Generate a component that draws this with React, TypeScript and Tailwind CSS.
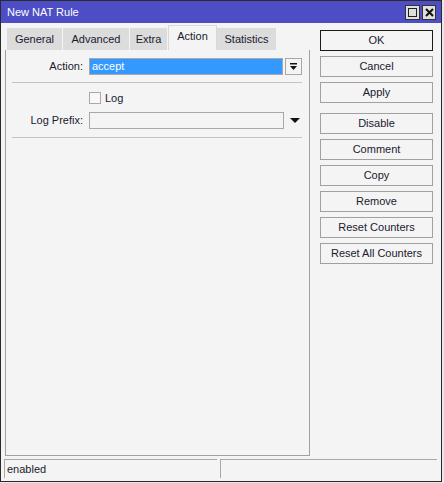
import { ReactNode } from "react";

const font = { fontFamily: '"Liberation Sans", Arial, sans-serif' };

function Tab({ label, width, active }: { label: string; width: number; active?: boolean }) {
    return (
        <div
            className={
                active
                    ? "flex h-[25px] items-center justify-center border-x border-t border-[#d8d8d8] bg-[#f4f4f4] pb-[3px]"
                    : "flex h-[22px] items-center justify-center border-r border-[#f4f4f4] bg-[#dcdcdc]"
            }
            style={{ width }}
        >
            {label}
        </div>
    );
}

function SideButton({ label, primary }: { label: string; primary?: boolean }) {
    return (
        <button
            className={`flex h-[21px] w-[113px] items-center justify-center bg-[#f4f4f4] border ${
                primary ? "border-[#1a1a1a]" : "border-[#a0a0a0]"
            }`}
        >
            {label}
        </button>
    );
}

function Row({ label, children }: { label: string; children: ReactNode }) {
    return (
        <div className="flex h-[17px] items-center">
            <span className="w-[77px] text-right">{label}</span>
            <div className="ml-[6px] flex items-center">{children}</div>
        </div>
    );
}

export default function App() {
    const tabs = [
        { label: "General", width: 56 },
        { label: "Advanced", width: 67 },
        { label: "Extra", width: 38 },
        { label: "Action", width: 49, active: true },
        { label: "Statistics", width: 60 },
    ];

    return (
        <div className="h-[483px] w-[444px] bg-[#e8e8e8] text-[11px] text-[#1a1a2e]" style={font}>
            <div className="flex h-[482px] w-[442px] flex-col border border-[#2a2a2a] bg-[#f4f4f4]">
                {/* title bar */}
                <div className="flex h-[22px] items-center justify-between bg-[#4d4dc6] pl-[6px] pr-[5px]">
                    <span className="text-[11px] text-white">New NAT Rule</span>
                    <div className="flex gap-[2px]">
                        <div className="flex h-[15px] w-[15px] items-center justify-center border border-[#333] bg-[#dedede]">
                            <div className="h-[9px] w-[9px] border border-[#222]" />
                        </div>
                        <div className="flex h-[15px] w-[14px] items-center justify-center border border-[#333] bg-[#dedede]">
                            <svg width="9" height="9" viewBox="0 0 9 9">
                                <path d="M1 1L8 8M8 1L1 8" stroke="#111" strokeWidth="2" />
                            </svg>
                        </div>
                    </div>
                </div>

                <div className="flex flex-1 pt-[2px]">
                    {/* left side */}
                    <div className="flex w-[309px] flex-col pl-[4px]">
                        <div className="flex h-[25px] items-end pl-[2px]">
                            {tabs.map((t) => (
                                <Tab key={t.label} label={t.label} width={t.width} active={t.active} />
                            ))}
                        </div>
                        <div className="flex h-[406px] flex-col border-x border-b border-[#a0a0a0]">
                            <div className="mt-[8px]">
                                <Row label="Action:">
                                    <div className="flex h-[17px] w-[194px] items-center border border-[#a8a8a8] bg-[#3399ff] px-[2px] text-white">
                                        accept
                                    </div>
                                    <div className="ml-[2px] flex h-[17px] w-[17px] items-center justify-center border border-[#a8a8a8] bg-[#f4f4f4]">
                                        <svg width="9" height="9" viewBox="0 0 9 9">
                                            <rect x="1" y="1" width="7" height="1.5" fill="#111" />
                                            <path d="M1 4H8L4.5 8Z" fill="#111" />
                                        </svg>
                                    </div>
                                </Row>
                            </div>
                            <div className="ml-[6px] mt-[7px] h-px w-[290px] bg-[#c4c4c4]" />
                            <div className="ml-[83px] mt-[9px] flex h-[12px] items-center">
                                <div className="h-[12px] w-[12px] border border-[#a8a8a8] bg-[#f8f8f8]" />
                                <span className="ml-[4px]">Log</span>
                            </div>
                            <div className="mt-[8px]">
                                <Row label="Log Prefix:">
                                    <div className="h-[17px] w-[195px] border border-[#a8a8a8] bg-[#f4f4f4]" />
                                    <svg className="ml-[6px]" width="10" height="5" viewBox="0 0 10 5">
                                        <path d="M0 0H10L5 5Z" fill="#111" />
                                    </svg>
                                </Row>
                            </div>
                            <div className="ml-[6px] mt-[8px] h-px w-[290px] bg-[#c4c4c4]" />
                        </div>
                    </div>

                    {/* right side buttons */}
                    <div className="ml-[10px] flex flex-col pt-[5px]">
                        <div className="flex flex-col gap-[5px]">
                            <SideButton label="OK" primary />
                            <SideButton label="Cancel" />
                            <SideButton label="Apply" />
                        </div>
                        <div className="mt-[10px] flex flex-col gap-[5px]">
                            <SideButton label="Disable" />
                            <SideButton label="Comment" />
                            <SideButton label="Copy" />
                            <SideButton label="Remove" />
                            <SideButton label="Reset Counters" />
                            <SideButton label="Reset All Counters" />
                        </div>
                    </div>
                </div>

                {/* status bar */}
                <div className="mb-[3px] flex h-[19px] gap-[3px] pl-[3px] pr-[4px]">
                    <div className="flex w-[213px] items-center border-l border-t border-[#a8a8a8] pl-[2px]">
                        enabled
                    </div>
                    <div className="flex-1 border-l border-t border-[#a8a8a8]" />
                </div>
            </div>
        </div>
    );
}
